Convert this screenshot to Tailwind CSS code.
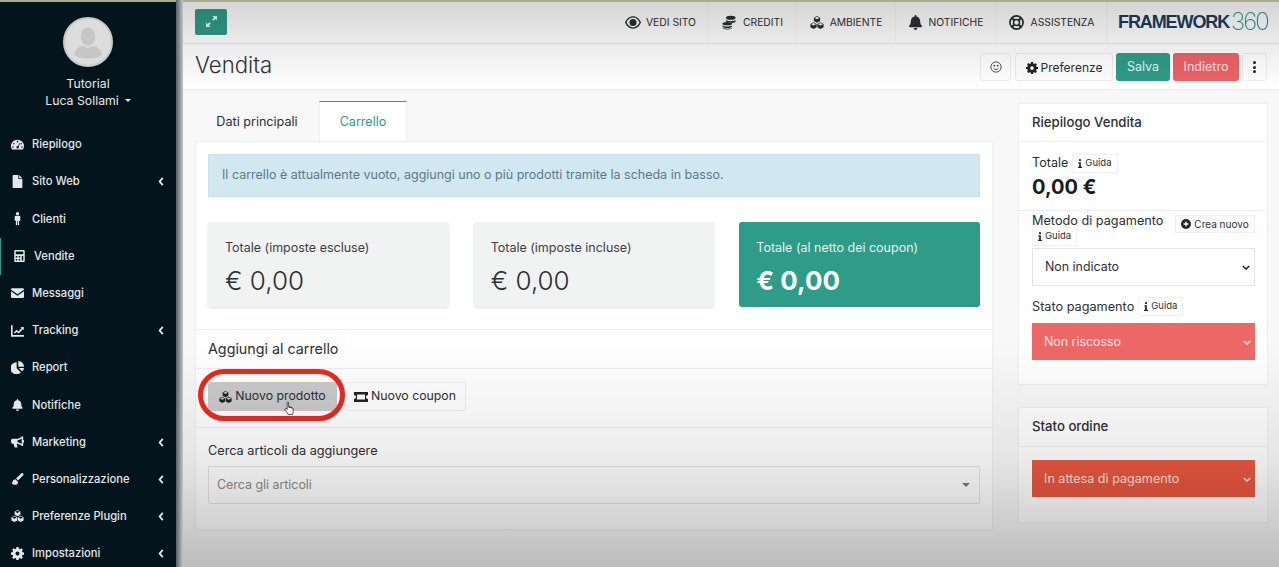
<!DOCTYPE html>
<html lang="it">
<head>
  <meta charset="UTF-8" />
  <title>Vendita - Framework360</title>
  <script src="https://cdn.jsdelivr.net/npm/@tailwindcss/browser@4"></script>
</head>
<body class="h-[567px] overflow-hidden bg-white text-[#2b2f33] font-['Inter','Open_Sans',sans-serif]">

  <!-- icone -->
  <svg class="hidden">
    <symbol id="i-gauge" viewBox="0 0 16 16"><path fill-rule="evenodd" d="M8 2a8 8 0 0 0-8 8c0 1.600.5 3 1.300 4h13.400A8 8 0 0 0 16 10a8 8 0 0 0-8-8zM8 3.500a1 1 0 1 1 0 2 1 1 0 0 1 0-2zM3.500 6a1 1 0 1 1 0 2 1 1 0 0 1 0-2zm9 0a1 1 0 1 1 0 2 1 1 0 0 1 0-2zM2.500 10a1 1 0 1 1 0 2 1 1 0 0 1 0-2zm11 0a1 1 0 1 1 0 2 1 1 0 0 1 0-2zM10.500 6.500l.8.400-2 3.400a1.500 1.500 0 1 1-.8-.4z"/></symbol>
    <symbol id="i-file" viewBox="0 0 12 16"><path d="M7 0v4.250c0 .4.350.75.750.75H12v10.250c0 .4-.350.750-.750.750H.750A.750.750 0 0 1 0 15.250V.750C0 .350.350 0 .750 0zm1 0 4 4H8z"/></symbol>
    <symbol id="i-male" viewBox="0 0 8 16"><circle cx="4" cy="2" r="2"/><path d="M2 4.500h4A1.500 1.500 0 0 1 7.500 6v4.200a.8.800 0 0 1-1.500.3V16H4.400v-5h-.8v5H2v-5.500a.8.800 0 0 1-1.500-.3V6A1.500 1.500 0 0 1 2 4.500z"/></symbol>
    <symbol id="i-calc" viewBox="0 0 14 16"><path fill-rule="evenodd" d="M1.500 0h11A1.500 1.500 0 0 1 14 1.500v13a1.500 1.500 0 0 1-1.500 1.500h-11A1.500 1.500 0 0 1 0 14.500v-13A1.500 1.500 0 0 1 1.500 0zM2 2v3.500h10V2zm0 6v2h2V8zm4 0v2h2V8zm4 0v6h2V8zm-8 4v2h2v-2zm4 0v2h2v-2z"/></symbol>
    <symbol id="i-mail" viewBox="0 0 16 12"><path d="M1.500 0h13A1.500 1.500 0 0 1 16 1.500v.4L8 7.500 0 1.900v-.4A1.500 1.500 0 0 1 1.500 0zM0 3.700l8 5.600 8-5.600v6.800a1.500 1.500 0 0 1-1.500 1.500h-13A1.500 1.500 0 0 1 0 10.500z"/></symbol>
    <symbol id="i-chart" viewBox="0 0 16 14"><path d="M0 0h2v12h14v2H0z"/><path d="m3.500 9 3.200-3.500 2.500 2L13 3.200l-1.300-1.200h4v4l-1.200-1.300-5 5.500-2.500-2L4.800 10.200z"/></symbol>
    <symbol id="i-pie" viewBox="0 0 16 16"><path d="M7 1.500V9l5.200 5.200A7.500 7.500 0 1 1 7 1.500z"/><path d="M9 0a7 7 0 0 1 7 7H9z"/><path d="M9.500 8.500H16a7 7 0 0 1-2.300 4.400z"/></symbol>
    <symbol id="i-bell" viewBox="0 0 448 512"><path d="M224 512c35.320 0 63.970-28.650 63.970-64H160.030c0 35.350 28.650 64 63.970 64zm215.390-149.710c-19.320-20.760-55.470-51.990-55.470-154.290 0-77.700-54.480-139.900-127.940-155.160V32c0-17.670-14.320-32-31.980-32s-31.980 14.330-31.980 32v20.840C118.560 68.100 64.080 130.300 64.080 208c0 102.300-36.150 133.530-55.470 154.290-6 6.450-8.660 14.160-8.610 21.710.11 16.400 12.980 32 32.100 32h383.800c19.120 0 32-15.600 32.100-32 .05-7.550-2.610-15.270-8.610-21.710z"/></symbol>
    <symbol id="i-horn" viewBox="0 0 16 14"><path fill-rule="evenodd" d="M14 0a1 1 0 0 1 1 1v3.500a1.500 1.500 0 0 1 0 3V11a1 1 0 0 1-1.600.8C11.500 10.300 9.500 9.300 7 9.100l.8 3.700a.8.800 0 0 1-.8 1H5a.8.800 0 0 1-.8-.6L3.200 9H2a2 2 0 0 1-2-2V5a2 2 0 0 1 2-2h4.500c2.600 0 5-1 6.900-2.800A1 1 0 0 1 14 0zm-.8 2.600C11.600 3.800 9.800 4.500 8 4.800v2.500c1.800.2 3.600 1 5.200 2.200z"/></symbol>
    <symbol id="i-brush" viewBox="0 0 16 16"><path d="M15.500.5c-.7-.7-1.700-.6-2.400 0L6 7.200l2.700 2.700L15.600 3c.6-.7.600-1.800-.1-2.500z"/><path d="M5 8.300c-1.700.1-3 1.200-3.300 3C1.500 12.500.9 13 0 13.300c1.400 1.700 3.300 2.400 5 2.400 2.600 0 4.100-1.700 3.600-4z"/></symbol>
    <symbol id="i-cubes" viewBox="0 0 16 15"><path fill-rule="evenodd" d="M8 0l3.600 1.900v4L8 7.900 4.400 5.900v-4zM8 .8 5.200 2.300 8 3.800l2.800-1.500zM4 7.200l3.600 1.900v4L4 15 .4 13.100v-4zM4 8 1.200 9.500 4 11l2.800-1.500zM12 7.200l3.600 1.900v4L12 15l-3.600-1.900v-4zM12 8 9.200 9.500 12 11l2.800-1.500z"/></symbol>
    <symbol id="i-cog" viewBox="0 0 16 16"><path fill-rule="evenodd" d="M6.700 0h2.600l.4 2.100 1.300.6 1.800-1.200 1.800 1.800-1.200 1.800.6 1.300 2 .4v2.600l-2 .4-.6 1.300 1.200 1.800-1.800 1.800-1.800-1.200-1.300.6-.4 2H6.700l-.4-2-1.300-.6-1.800 1.200-1.800-1.800 1.200-1.800-.6-1.300-2-.4V6.700l2-.4.6-1.300-1.200-1.800 1.800-1.800L5 2.700l1.300-.6zM8 5.500a2.500 2.500 0 1 0 0 5 2.500 2.500 0 0 0 0-5z"/></symbol>
    <symbol id="i-eye" viewBox="0 0 18 14"><path fill-rule="evenodd" d="M9 0c3.900 0 7.300 2.700 9 7-1.700 4.300-5.100 7-9 7S1.700 11.300 0 7c1.700-4.300 5.100-7 9-7zm0 1.500C6 1.500 3.300 3.500 1.700 7 3.300 10.500 6 12.500 9 12.500s5.700-2 7.300-5.500C14.700 3.500 12 1.500 9 1.500zM9 3a4 4 0 1 1 0 8 4 4 0 0 1 0-8z"/></symbol>
    <symbol id="i-coins" viewBox="0 0 16 16"><ellipse cx="10" cy="2.500" rx="5.500" ry="2.300"/><path d="M4.500 5.200c1.300 1 3.200 1.300 5.500 1.300s4.200-.3 5.500-1.300v1.500c0 1-1.800 1.800-4.200 2C10.300 7.800 8 7.300 5.500 7.300l-1-.1z"/><ellipse cx="6" cy="9.300" rx="5.500" ry="1.800"/><path d="M.5 11.500c1.300.9 3.200 1.200 5.500 1.200s4.200-.3 5.500-1.200v1c0 1-2.500 1.700-5.500 1.700S.5 13.500.5 12.500z"/><path d="M.5 14c1.300.8 3.200 1 5.500 1s4.200-.2 5.500-1c0 1.100-2.500 2-5.500 2S.5 15.100.5 14z"/></symbol>
    <symbol id="i-ring" viewBox="0 0 16 16"><g fill="none" stroke="currentColor"><circle cx="8" cy="8" r="7" stroke-width="1.800"/><circle cx="8" cy="8" r="3.200" stroke-width="1.600"/><path stroke-width="2.200" d="M2.900 2.900l2.900 2.900M13.100 2.900l-2.900 2.900M2.900 13.100l2.900-2.900M13.100 13.100l-2.900-2.900"/></g></symbol>
    <symbol id="i-back" viewBox="0 0 6 10"><path fill="none" stroke="currentColor" stroke-width="2" d="M5 1 1.500 5 5 9"/></symbol>
    <symbol id="i-chev" viewBox="0 0 10 6"><path fill="none" stroke="currentColor" stroke-width="1.800" d="m1 1 4 4 4-4"/></symbol>
    <symbol id="i-info" viewBox="0 0 6 14"><circle cx="3" cy="1.800" r="1.700"/><path d="M.5 5h3.800v7H6v2H0v-2h1.700V7H.5z"/></symbol>
  </svg>

  <div class="flex h-full">

    <!-- Sidebar -->
    <aside class="w-[176px] shrink-0 h-full bg-[#03141c] text-[#e4e8ea] flex flex-col overflow-hidden">
      <div class="flex flex-col items-center pt-[17px]">
        <div class="w-[50px] h-[50px] rounded-full bg-[#dddddd] border-2 border-[#c9c9c9] flex items-center justify-center overflow-hidden">
          <svg viewBox="0 0 50 50" class="w-[46px] h-[46px]" fill="#c6c6c6"><ellipse cx="25" cy="19" rx="8" ry="10"/><path d="M10 39c0-6 5-9 10-10l5 3 5-3c5 1 10 4 10 10-4 3-9 4-15 4s-11-1-15-4z"/></svg>
        </div>
        <div class="mt-[8px] text-[12.3px] leading-[17px]">Tutorial</div>
        <div class="text-[12.3px] leading-[17px] flex items-center gap-[6px]">Luca Sollami <span class="w-0 h-0 border-x-[3px] border-x-transparent border-t-[3px] border-t-[#e4e8ea]"></span></div>
      </div>
      <nav class="mt-[17px] flex flex-col text-[11.2px] font-medium">
        <a class="h-[37.2px] flex items-center pl-[11px] pr-[12px] gap-[8px]"><svg class="w-[13px] h-[13px]" fill="currentColor"><use href="#i-gauge"/></svg>Riepilogo</a>
        <a class="h-[37.2px] flex items-center pl-[11px] pr-[12px] gap-[8px]"><svg class="w-[13px] h-[13px]" fill="currentColor"><use href="#i-file"/></svg>Sito Web<svg class="w-[6px] h-[9px] ml-auto"><use href="#i-back"/></svg></a>
        <a class="h-[37.2px] flex items-center pl-[11px] pr-[12px] gap-[8px]"><svg class="w-[13px] h-[13px]" fill="currentColor"><use href="#i-male"/></svg>Clienti</a>
        <a class="h-[37.2px] flex items-center pl-[12px] pr-[12px] gap-[8px] border-l border-[#2e9c88]"><svg class="w-[13px] h-[12px]" fill="currentColor"><use href="#i-calc"/></svg>Vendite</a>
        <a class="h-[37.2px] flex items-center pl-[11px] pr-[12px] gap-[8px]"><svg class="w-[13px] h-[12px]" fill="currentColor"><use href="#i-mail"/></svg>Messaggi</a>
        <a class="h-[37.2px] flex items-center pl-[11px] pr-[12px] gap-[8px]"><svg class="w-[13px] h-[12px]" fill="currentColor"><use href="#i-chart"/></svg>Tracking<svg class="w-[6px] h-[9px] ml-auto"><use href="#i-back"/></svg></a>
        <a class="h-[37.2px] flex items-center pl-[11px] pr-[12px] gap-[8px]"><svg class="w-[13px] h-[13px]" fill="currentColor"><use href="#i-pie"/></svg>Report</a>
        <a class="h-[37.2px] flex items-center pl-[11px] pr-[12px] gap-[8px]"><svg class="w-[13px] h-[12px]" fill="currentColor"><use href="#i-bell"/></svg>Notifiche</a>
        <a class="h-[37.2px] flex items-center pl-[11px] pr-[12px] gap-[8px]"><svg class="w-[13px] h-[12px]" fill="currentColor"><use href="#i-horn"/></svg>Marketing<svg class="w-[6px] h-[9px] ml-auto"><use href="#i-back"/></svg></a>
        <a class="h-[37.2px] flex items-center pl-[11px] pr-[12px] gap-[8px]"><svg class="w-[13px] h-[12px]" fill="currentColor"><use href="#i-brush"/></svg>Personalizzazione<svg class="w-[6px] h-[9px] ml-auto"><use href="#i-back"/></svg></a>
        <a class="h-[37.2px] flex items-center pl-[11px] pr-[12px] gap-[8px]"><svg class="w-[13px] h-[12px]" fill="currentColor"><use href="#i-cubes"/></svg>Preferenze Plugin<svg class="w-[6px] h-[9px] ml-auto"><use href="#i-back"/></svg></a>
        <a class="h-[37.2px] flex items-center pl-[11px] pr-[12px] gap-[8px]"><svg class="w-[13px] h-[13px]" fill="currentColor"><use href="#i-cog"/></svg>Impostazioni<svg class="w-[6px] h-[9px] ml-auto"><use href="#i-back"/></svg></a>
      </nav>
    </aside>

    <div class="w-[7px] shrink-0 bg-linear-to-r from-[#586066] to-[#c4c6c8]"></div>

    <!-- Contenuto -->
    <div class="relative flex-1 min-w-0 h-full flex flex-col bg-[#f8f8f9] overflow-hidden">

      <!-- Barra superiore -->
      <header class="h-[44px] shrink-0 bg-white border-b border-[#e8e8e8] flex items-center pl-[12px] pr-[11px]">
        <button class="w-[32px] h-[26px] bg-[#2e9c88] rounded-[2px] flex items-center justify-center">
          <svg viewBox="0 0 12 12" class="w-[11px] h-[11px]" fill="#e8f5f2"><path d="M7 0h5v5l-1.700-1.700-2 2L6.700 3.700l2-2zM5 12H0V7l1.700 1.700 2-2 1.600 1.600-2 2z"/></svg>
        </button>
        <nav class="ml-auto flex items-center h-full text-[10.3px] uppercase">
          <a class="w-[95px] h-full pt-[2px] flex items-center justify-center gap-[5px]"><svg class="w-[16px] h-[13px]" fill="currentColor"><use href="#i-eye"/></svg>Vedi sito</a>
          <a class="w-[88px] h-full pt-[2px] flex items-center justify-center gap-[7px] border-l border-black/[.03]"><svg class="w-[14px] h-[15px]" fill="currentColor"><use href="#i-coins"/></svg>Crediti</a>
          <a class="w-[99px] h-full pt-[2px] flex items-center justify-center gap-[6px] border-l border-black/[.03]"><svg class="w-[14px] h-[13px]" fill="currentColor"><use href="#i-cubes"/></svg>Ambiente</a>
          <a class="w-[101px] h-full pt-[2px] flex items-center justify-center gap-[7px] border-l border-black/[.03]"><svg class="w-[13px] h-[15px]" fill="currentColor"><use href="#i-bell"/></svg>Notifiche</a>
          <a class="w-[110px] h-full pt-[2px] flex items-center justify-center gap-[7px] border-l border-black/[.03]"><svg class="w-[15px] h-[15px]" fill="currentColor"><use href="#i-ring"/></svg>Assistenza</a>
          <span class="h-full w-[162px] pt-[1px] flex items-center pl-[11px] border-l border-black/[.03] normal-case font-['Liberation_Sans'] text-[18px] tracking-[-1.1px]"><b class="text-[#1d3c5e]">FRAMEWORK</b><span class="ml-[2px] font-['Inter'] font-extralight text-[24px] tracking-[-2px] bg-linear-to-r from-[#2e9c88] to-[#2f7fa8] bg-clip-text text-transparent">360</span></span>
        </nav>
      </header>

      <!-- Titolo pagina -->
      <div class="h-[46px] shrink-0 bg-white border-b border-[#eeeeee] flex items-center pl-[12px] pr-[12px]">
        <h1 class="text-[22.2px] font-light text-[#30343a] pb-[3px]">Vendita</h1>
        <div class="ml-auto flex items-center gap-[3px] text-[12px] pt-[1px]">
          <button class="w-[31px] h-[28px] bg-white border border-[#eeeeee] rounded-[3px] flex items-center justify-center">
            <svg viewBox="0 0 14 14" class="w-[12px] h-[12px]" fill="none" stroke="#333333"><circle cx="7" cy="7" r="6"/><circle cx="5" cy="5.500" r=".6" fill="#333333"/><circle cx="9" cy="5.500" r=".6" fill="#333333"/><path d="M4 8.500c1.500 2 4.500 2 6 0"/></svg>
          </button>
          <button class="w-[98px] h-[28px] ml-[1px] bg-white border border-[#eeeeee] rounded-[3px] flex items-center justify-center gap-[3px] pt-[1px]">
            <svg class="w-[12px] h-[12px]" fill="#222222"><use href="#i-cog"/></svg>Preferenze
          </button>
          <button class="w-[54px] h-[28px] bg-[#2e9c88] text-[#e8f5f2] rounded-[3px] text-[12.5px]">Salva</button>
          <button class="w-[66px] h-[28px] bg-[#ec6266] text-[#fbe3e3] rounded-[3px] text-[12.5px]">Indietro</button>
          <button class="w-[25px] h-[28px] bg-white border border-[#eeeeee] rounded-[3px] flex flex-col items-center justify-center gap-[1.500px]">
            <span class="w-[3px] h-[3px] rounded-full bg-[#222222]"></span><span class="w-[3px] h-[3px] rounded-full bg-[#222222]"></span><span class="w-[3px] h-[3px] rounded-full bg-[#222222]"></span>
          </button>
        </div>
      </div>

      <!-- Colonne -->
      <div class="flex-1 flex items-start pl-[12px] pr-[12px] pt-[11px] gap-[26px] min-h-0">

        <!-- Colonna sinistra -->
        <section class="w-[798px] shrink-0">
          <div class="h-[40px] flex text-[12.6px]">
            <a class="w-[124px] pt-[2px] flex items-center justify-center">Dati principali</a>
            <a class="w-[88px] pt-[2px] flex items-center justify-center bg-white border-t border-x border-t-[#2e9c88] border-x-[#eeeeee] text-[#2e9c88]">Carrello</a>
          </div>
          <div class="bg-white border border-[#eeeeee]">
            <div class="px-[12px] pt-[12px]">
              <div class="h-[43px] bg-[#d2e8f0] border border-[#c8e1ea] flex items-center pl-[13px] text-[12.5px] text-[#5a7a89]">Il carrello è attualmente vuoto, aggiungi uno o più prodotti tramite la scheda in basso.</div>
              <div class="mt-[25px] grid grid-cols-3 gap-[25px]">
                <div class="h-[85px] bg-[#f1f3f2] rounded-[3px] pl-[17px] pt-[17px] shadow-sm">
                  <div class="text-[12.5px] text-[#3b4045]">Totale (imposte escluse)</div>
                  <div class="mt-[7px] text-[26px] leading-[32px] font-light">€ 0,00</div>
                </div>
                <div class="h-[85px] bg-[#f1f3f2] rounded-[3px] pl-[17px] pt-[17px] shadow-sm">
                  <div class="text-[12.5px] text-[#3b4045]">Totale (imposte incluse)</div>
                  <div class="mt-[7px] text-[26px] leading-[32px] font-light">€ 0,00</div>
                </div>
                <div class="h-[85px] bg-[#2e9c88] rounded-[3px] pl-[17px] pt-[17px] text-white">
                  <div class="text-[12.5px] text-[#e4f3f0]">Totale (al netto dei coupon)</div>
                  <div class="mt-[7px] text-[26px] leading-[32px] font-bold">€ 0,00</div>
                </div>
              </div>
            </div>
            <div class="mt-[22px] h-[40px] border-y border-[#eeeeee] flex items-center pl-[12px] text-[14.3px]">Aggiungi al carrello</div>
            <div class="relative px-[12px] pt-[13px] pb-[16px] border-b border-[#eeeeee] flex gap-[7px] text-[12.3px]">
              <button class="w-[129px] h-[29px] bg-[#c9cac9] rounded-[3px] flex items-center justify-center gap-[3px]"><svg class="w-[13px] h-[12px]" fill="#222222"><use href="#i-cubes"/></svg>Nuovo prodotto</button>
              <button class="w-[122px] h-[29px] bg-white border border-[#eeeeee] rounded-[3px] flex items-center justify-center gap-[3px]">
                <svg viewBox="0 0 14 10" class="w-[14px] h-[10px]" fill="#222222"><path fill-rule="evenodd" d="M0 0h14v3a2 2 0 0 0 0 4v3H0V7a2 2 0 0 0 0-4zm3 2.500v5h8v-5z"/></svg>Nuovo coupon</button>
              <!-- cerchio rosso -->
              <div class="absolute left-[2px] top-[0px] w-[147px] h-[52px] border-[5px] border-[#f0271c] rounded-[26px]"></div>
              <!-- cursore -->
              <svg viewBox="0 0 12 16" class="absolute left-[88px] top-[32px] w-[11px] h-[15px]" fill="#ffffff" stroke="#222222" stroke-width=".8"><path d="M3.500 1.500c0-1 1.500-1 1.500 0v5l1-.3v1-1l1.300.2v1-.8l1.200.3v1-.6c1-.2 1.500.3 1.500 1v3c0 1.500-.5 2-.7 3.200H4.500C4 12.500 1 9.500 1 8.800c0-.8 1-1.200 2.500.2z"/></svg>
            </div>
            <div class="px-[12px] pt-[14px] pb-[25px]">
              <div class="text-[12.7px] leading-[17px]">Cerca articoli da aggiungere</div>
              <div class="mt-[7px] h-[38px] bg-white border border-[#e4e4e4] rounded-[2px] flex items-center pl-[8px] pr-[9px] text-[12.4px] text-[#8a8a8a]">Cerca gli articoli<span class="ml-auto w-0 h-0 border-x-[4px] border-x-transparent border-t-[4px] border-t-[#777777]"></span></div>
            </div>
          </div>
        </section>

        <!-- Colonna destra -->
        <aside class="w-[250px] shrink-0 -ml-[1px] pt-[2px] flex flex-col gap-[22px]">
          <div class="bg-white border border-[#eeeeee] h-[282px]">
            <div class="h-[38px] border-b border-[#eeeeee] flex items-center pl-[13px] text-[13.2px] font-medium">Riepilogo Vendita</div>
            <div class="h-[69px] border-b border-[#eeeeee] pl-[13px] pt-[12px]">
              <div class="flex items-center gap-[4px] text-[12.6px] h-[19px]">Totale
                <span class="h-[19px] px-[5px] border border-[#f0f0f0] flex items-center gap-[3px] text-[9.5px]"><svg class="w-[4px] h-[9px]" fill="#222222"><use href="#i-info"/></svg>Guida</span></div>
              <div class="mt-[2px] text-[20px] leading-[24px] font-bold text-[#1a1d20]">0,00 €</div>
            </div>
            <div class="pl-[13px] pr-[12px] pt-[4px]">
              <div class="flex justify-between items-start">
                <div class="text-[12.7px] leading-[15px] -mt-[2px]">Metodo di pagamento</div>
                <span class="h-[18px] w-[80px] border border-[#f0f0f0] flex items-center justify-center gap-[3px] text-[10px]"><svg class="w-[10px] h-[10px]" viewBox="0 0 10 10"><circle cx="5" cy="5" r="5" fill="#222222"/><path d="M2.500 5h5M5 2.500v5" stroke="#fff" stroke-width="1.300"/></svg>Crea nuovo</span>
              </div>
              <span class="flex w-fit -mt-[6px] h-[19px] px-[5px] border border-[#f0f0f0] items-center gap-[3px] text-[9.5px]"><svg class="w-[4px] h-[9px]" fill="#222222"><use href="#i-info"/></svg>Guida</span>
              <div class="h-[38px] mt-[2px] border border-[#e4e4e4] flex items-center pl-[12px] pr-[4px] text-[12.4px]">Non indicato<svg class="w-[8px] h-[5px] ml-auto text-[#222222]"><use href="#i-chev"/></svg></div>
              <div class="flex items-center gap-[4px] text-[12.7px] h-[19px] mt-[11px]">Stato pagamento
                <span class="h-[19px] px-[5px] border border-[#f0f0f0] flex items-center gap-[3px] text-[9.5px]"><svg class="w-[4px] h-[9px]" fill="#222222"><use href="#i-info"/></svg>Guida</span></div>
              <div class="h-[37px] mt-[7px] pt-[1px] bg-[#ee6767] text-[#fdeaea] flex items-center pl-[12px] pr-[4px] text-[12.4px]">Non riscosso<svg class="w-[8px] h-[5px] ml-auto text-[#fdeaea]"><use href="#i-chev"/></svg></div>
            </div>
          </div>
          <div class="bg-white border border-[#eeeeee] h-[116px]">
            <div class="h-[39px] border-b border-[#eeeeee] flex items-center pl-[13px] text-[13.2px] font-medium">Stato ordine</div>
            <div class="pl-[13px] pr-[12px] pt-[13px]">
              <div class="h-[37px] pt-[1px] bg-[#e9573f] text-[#fbe4df] flex items-center pl-[12px] pr-[4px] text-[12.6px]">In attesa di pagamento<svg class="w-[8px] h-[5px] ml-auto text-[#fbe4df]"><use href="#i-chev"/></svg></div>
            </div>
          </div>
        </aside>
      </div>

      <!-- Vignettatura del video -->
      <div class="absolute inset-0 pointer-events-none bg-[linear-gradient(to_bottom,rgba(0,0,0,0.17)_0px,rgba(0,0,0,0.08)_44px,rgba(0,0,0,0)_90px,rgba(0,0,0,0)_340px,rgba(0,0,0,0.08)_460px,rgba(0,0,0,0.24)_567px)]"></div>
      <div class="absolute top-0 inset-x-0 h-[2px] bg-[#a8ad8c]"></div>
    </div>
  </div>
  <div class="absolute top-0 left-0 w-[176px] h-[2px] bg-[#a8ad8c]"></div>
</body>
</html>
